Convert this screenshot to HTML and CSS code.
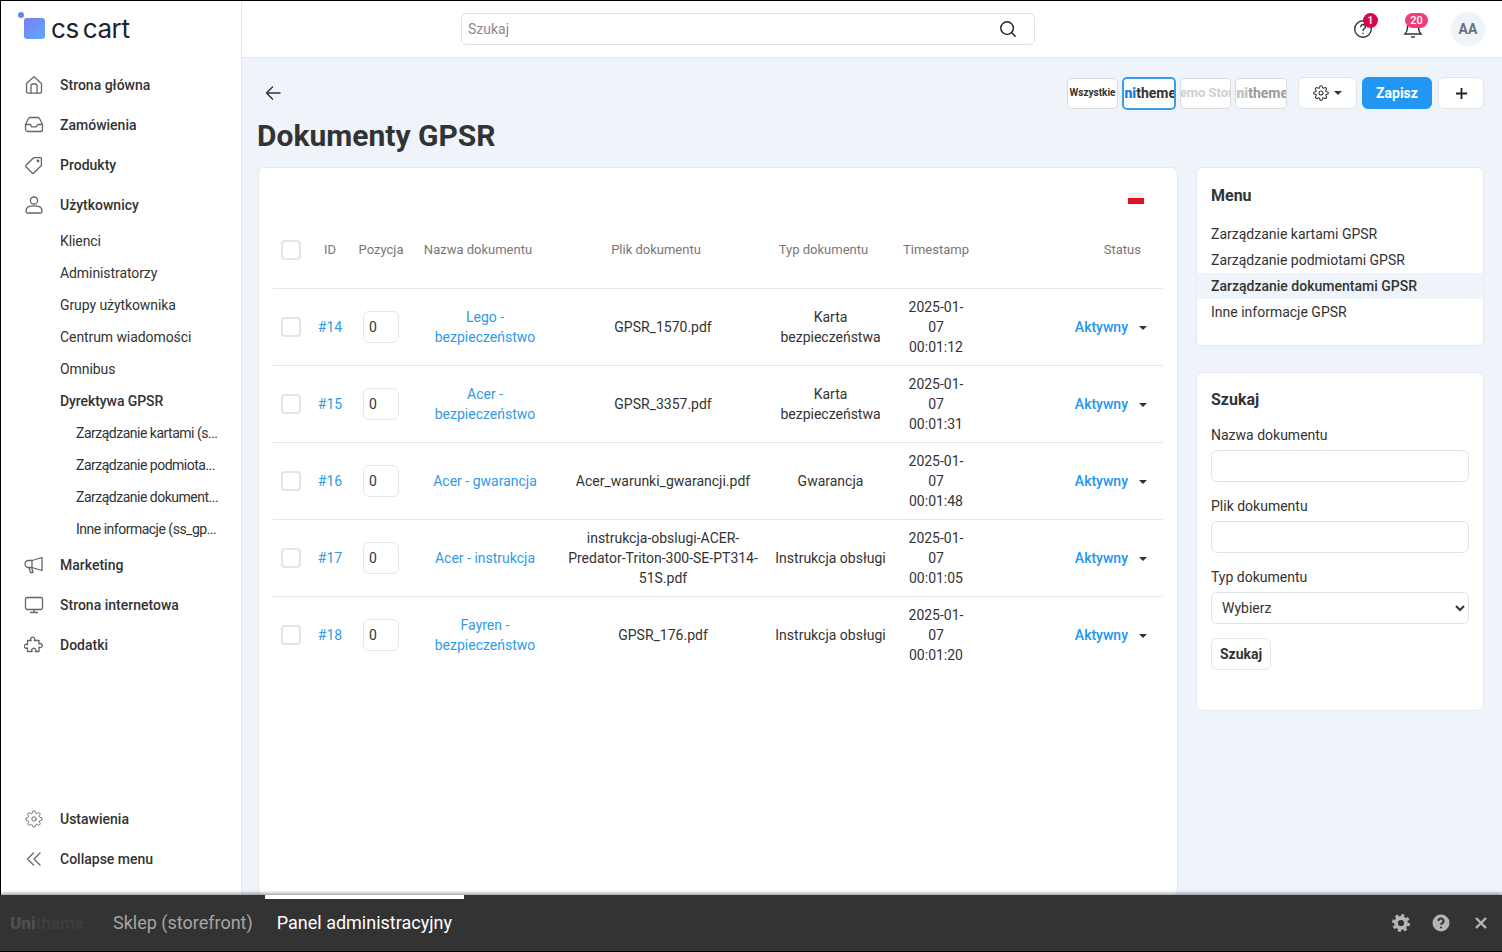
FILE: index.html
```html
<!DOCTYPE html>
<html lang="pl">
<head>
    <meta charset="UTF-8">
    <meta name="viewport" content="width=device-width, initial-scale=1.0">
    <title>Dokumenty GPSR</title>
    <link rel="stylesheet" href="styles.css">
</head>
<body>
    <div class="app">
        <div class="main">
            <aside class="sidebar">
                <div class="logo">
                    <span class="logo-dot"></span>
                    <span class="logo-mark"></span>
                    <span class="logo-text">cs cart</span>
                </div>
                <nav class="nav">
                    <a class="nav-item">
                        <svg class="nav-icon" viewBox="0 0 20 20"><path d="M2.500 8.500 10 1.800l7.500 6.700v7.700a2 2 0 0 1-2 2h-11a2 2 0 0 1-2-2z"/><path d="M7 18v-7a2 2 0 0 1 2-2h2a2 2 0 0 1 2 2v7"/></svg>
                        Strona główna
                    </a>
                    <a class="nav-item">
                        <svg class="nav-icon" viewBox="0 0 20 20"><path d="M1.500 9.500 4.500 3.500a2 2 0 0 1 1.600-1h7.800a2 2 0 0 1 1.600 1l3 6v5a2 2 0 0 1-2 2h-13a2 2 0 0 1-2-2z"/><path d="M1.500 9.500h4.800l1.400 2.400h4.600l1.400-2.400h4.800"/></svg>
                        Zamówienia
                    </a>
                    <a class="nav-item">
                        <svg class="nav-icon" viewBox="0 0 20 20"><path d="M2 10.300 9.600 2.700h7a.8.8 0 0 1 .8.800v7l-7.600 7.500a1.200 1.200 0 0 1-1.700 0l-6.100-6.200a1.100 1.100 0 0 1 0-1.500z"/><circle cx="14" cy="6" r=".8"/></svg>
                        Produkty
                    </a>
                    <a class="nav-item">
                        <svg class="nav-icon" viewBox="0 0 20 20"><circle cx="10" cy="5.600" r="3.600"/><path d="M2 15.500c0-3 2.800-4.600 8-4.600s8 1.600 8 4.600v1a1.500 1.500 0 0 1-1.500 1.500h-13A1.500 1.500 0 0 1 2 16.500z"/></svg>
                        Użytkownicy
                    </a>
                    <a class="nav-sub">Klienci</a>
                    <a class="nav-sub">Administratorzy</a>
                    <a class="nav-sub">Grupy użytkownika</a>
                    <a class="nav-sub">Centrum wiadomości</a>
                    <a class="nav-sub">Omnibus</a>
                    <a class="nav-sub is-open">Dyrektywa GPSR</a>
                    <a class="nav-sub nav-deep">Zarządzanie kartami (s...</a>
                    <a class="nav-sub nav-deep">Zarządzanie podmiota...</a>
                    <a class="nav-sub nav-deep">Zarządzanie dokument...</a>
                    <a class="nav-sub nav-deep">Inne informacje (ss_gp...</a>
                    <a class="nav-item">
                        <svg class="nav-icon" viewBox="0 0 20 20"><path d="M18 2.500v13L8 12.500H4.500a3 3 0 0 1 0-7H8z"/><path d="M8 5.500v7"/><path d="m5 12.500 1.500 5h2.500l-1.300-4.800"/></svg>
                        Marketing
                    </a>
                    <a class="nav-item">
                        <svg class="nav-icon" viewBox="0 0 20 20"><rect x="1.500" y="2.500" width="17" height="12" rx="1.800"/><path d="M10 14.500v3M6.500 17.500h7"/></svg>
                        Strona internetowa
                    </a>
                    <a class="nav-item">
                        <svg class="nav-icon" viewBox="0 0 20 20"><path d="M3.500 5.500H7.200a2 2 0 1 1 3.100 0H15V9a2 2 0 1 1 0 3.100V16.500H11.300a2 2 0 1 0-3.100 0H3.500V12.800a2 2 0 1 1 0-3.100z"/></svg>
                        Dodatki
                    </a>
                </nav>
                <div class="nav nav-bottom">
                    <a class="nav-item">
                        <svg class="nav-icon" viewBox="-1.500 -1.500 27 27"><circle cx="12" cy="12" r="3"/><path d="M19.400 15a1.650 1.650 0 0 0 .33 1.820l.06.06a2 2 0 1 1-2.830 2.830l-.06-.06a1.650 1.650 0 0 0-2.820 1.170V21a2 2 0 1 1-4 0v-.09A1.650 1.650 0 0 0 7.260 19.740l-.06.06a2 2 0 1 1-2.830-2.830l.06-.06A1.650 1.650 0 0 0 3.260 14H3a2 2 0 1 1 0-4h.09A1.650 1.650 0 0 0 4.260 7.180l-.06-.06a2 2 0 1 1 2.830-2.830l.06.06A1.650 1.650 0 0 0 10 3.090V3a2 2 0 1 1 4 0v.09a1.650 1.650 0 0 0 2.820 1.170l.06-.06a2 2 0 1 1 2.830 2.830l-.06.06A1.650 1.650 0 0 0 20.910 10H21a2 2 0 1 1 0 4h-.09a1.650 1.650 0 0 0-1.510 1z"/></svg>
                        Ustawienia
                    </a>
                    <a class="nav-item">
                        <svg class="nav-icon" viewBox="0 0 20 20"><path d="M9.500 4 3.500 10l6 6M16 4l-6 6 6 6"/></svg>
                        Collapse menu
                    </a>
                </div>
            </aside>

            <div class="page">
                <header class="topbar">
                    <div class="search">
                        <span class="search-hint">Szukaj</span>
                        <svg class="search-icon" viewBox="0 0 20 20"><circle cx="9" cy="9" r="7"/><path d="m14.200 14.200 3.800 3.800"/></svg>
                    </div>
                    <div class="top-icons">
                        <span class="top-icon">
                            <svg viewBox="0 0 20 20"><circle cx="10" cy="10" r="8.300"/><path d="M7.800 7.800a2.300 2.300 0 1 1 3.400 2c-.8.500-1.200 1-1.200 1.700M10 14.200v.3"/></svg>
                            <span class="badge badge-help">1</span>
                        </span>
                        <span class="top-icon">
                            <svg viewBox="0 0 20 20"><path d="M4.500 8a5.500 5.500 0 0 1 11 0c0 4 1.500 6 2.500 7H2c1-1 2.500-3 2.500-7z"/><path d="M8.500 18h3"/></svg>
                            <span class="badge badge-bell">20</span>
                        </span>
                        <span class="avatar">AA</span>
                    </div>
                </header>

                <div class="content">
                    <div class="toolbar">
                        <svg class="back" viewBox="0 0 16 16"><path d="M15 8H1.500M7.500 2 1.500 8l6 6"/></svg>
                        <div class="tools">
                            <div class="stores">
                                <span class="store store-all">Wszystkie</span>
                                <span class="store store-logo is-current"><span class="store-name"><b>Uni</b>theme</span></span>
                                <span class="store store-demo">Demo Store</span>
                                <span class="store store-logo is-faded"><span class="store-name"><b>Uni</b>theme</span></span>
                            </div>
                            <button class="btn btn-gear">
                                <svg viewBox="0 0 24 24"><circle cx="12" cy="12" r="3"/><path d="M19.400 15a1.650 1.650 0 0 0 .33 1.820l.06.06a2 2 0 1 1-2.830 2.830l-.06-.06a1.650 1.650 0 0 0-2.820 1.170V21a2 2 0 1 1-4 0v-.09A1.650 1.650 0 0 0 7.260 19.740l-.06.06a2 2 0 1 1-2.830-2.830l.06-.06A1.650 1.650 0 0 0 3.260 14H3a2 2 0 1 1 0-4h.09A1.650 1.650 0 0 0 4.260 7.180l-.06-.06a2 2 0 1 1 2.830-2.830l.06.06A1.650 1.650 0 0 0 10 3.090V3a2 2 0 1 1 4 0v.09a1.650 1.650 0 0 0 2.820 1.170l.06-.06a2 2 0 1 1 2.830 2.830l-.06.06A1.650 1.650 0 0 0 20.910 10H21a2 2 0 1 1 0 4h-.09a1.650 1.650 0 0 0-1.510 1z"/></svg>
                                <span class="caret"></span>
                            </button>
                            <button class="btn btn-save">Zapisz</button>
                            <button class="btn btn-plus">
                                <svg viewBox="0 0 14 14"><path d="M7 1v12M1 7h12"/></svg>
                            </button>
                        </div>
                    </div>
                    <h1 class="title">Dokumenty GPSR</h1>

                    <div class="columns">
                        <section class="card card-table">
                            <div class="flag-row"><span class="flag"></span></div>
                            <table class="docs">
                                <thead>
                                    <tr>
                                        <th class="col-check"><span class="check"></span></th>
                                        <th class="col-id">ID</th>
                                        <th class="col-pos">Pozycja</th>
                                        <th class="col-name sortable">Nazwa dokumentu</th>
                                        <th class="col-file sortable">Plik dokumentu</th>
                                        <th class="col-type sortable">Typ dokumentu</th>
                                        <th class="col-time">Timestamp</th>
                                        <th class="col-status">Status</th>
                                    </tr>
                                </thead>
                                <tbody>
                                    <tr>
                                        <td class="col-check"><span class="check"></span></td>
                                        <td class="col-id"><a>#14</a></td>
                                        <td class="col-pos"><span class="pos">0</span></td>
                                        <td class="col-name"><a>Lego - bezpieczeństwo</a></td>
                                        <td class="col-file">GPSR_1570.pdf</td>
                                        <td class="col-type">Karta bezpieczeństwa</td>
                                        <td class="col-time">2025-01-07 00:01:12</td>
                                        <td class="col-status"><a class="state">Aktywny</a><span class="caret"></span></td>
                                    </tr>
                                    <tr>
                                        <td class="col-check"><span class="check"></span></td>
                                        <td class="col-id"><a>#15</a></td>
                                        <td class="col-pos"><span class="pos">0</span></td>
                                        <td class="col-name"><a>Acer - bezpieczeństwo</a></td>
                                        <td class="col-file">GPSR_3357.pdf</td>
                                        <td class="col-type">Karta bezpieczeństwa</td>
                                        <td class="col-time">2025-01-07 00:01:31</td>
                                        <td class="col-status"><a class="state">Aktywny</a><span class="caret"></span></td>
                                    </tr>
                                    <tr>
                                        <td class="col-check"><span class="check"></span></td>
                                        <td class="col-id"><a>#16</a></td>
                                        <td class="col-pos"><span class="pos">0</span></td>
                                        <td class="col-name"><a>Acer - gwarancja</a></td>
                                        <td class="col-file">Acer_warunki_gwarancji.pdf</td>
                                        <td class="col-type">Gwarancja</td>
                                        <td class="col-time">2025-01-07 00:01:48</td>
                                        <td class="col-status"><a class="state">Aktywny</a><span class="caret"></span></td>
                                    </tr>
                                    <tr>
                                        <td class="col-check"><span class="check"></span></td>
                                        <td class="col-id"><a>#17</a></td>
                                        <td class="col-pos"><span class="pos">0</span></td>
                                        <td class="col-name"><a>Acer - instrukcja</a></td>
                                        <td class="col-file">instrukcja-obslugi-ACER-Predator-Triton-300-SE-PT314-51S.pdf</td>
                                        <td class="col-type">Instrukcja obsługi</td>
                                        <td class="col-time">2025-01-07 00:01:05</td>
                                        <td class="col-status"><a class="state">Aktywny</a><span class="caret"></span></td>
                                    </tr>
                                    <tr>
                                        <td class="col-check"><span class="check"></span></td>
                                        <td class="col-id"><a>#18</a></td>
                                        <td class="col-pos"><span class="pos">0</span></td>
                                        <td class="col-name"><a>Fayren - bezpieczeństwo</a></td>
                                        <td class="col-file">GPSR_176.pdf</td>
                                        <td class="col-type">Instrukcja obsługi</td>
                                        <td class="col-time">2025-01-07 00:01:20</td>
                                        <td class="col-status"><a class="state">Aktywny</a><span class="caret"></span></td>
                                    </tr>
                                </tbody>
                            </table>
                        </section>

                        <div class="side">
                            <section class="card card-menu">
                                <h2>Menu</h2>
                                <a class="menu-link">Zarządzanie kartami GPSR</a>
                                <a class="menu-link">Zarządzanie podmiotami GPSR</a>
                                <a class="menu-link is-active">Zarządzanie dokumentami GPSR</a>
                                <a class="menu-link">Inne informacje GPSR</a>
                            </section>
                            <section class="card card-search">
                                <h2>Szukaj</h2>
                                <label class="field-label">Nazwa dokumentu</label>
                                <input class="field" type="text">
                                <label class="field-label">Plik dokumentu</label>
                                <input class="field" type="text">
                                <label class="field-label">Typ dokumentu</label>
                                <select class="field field-select"><option>Wybierz</option></select>
                                <button class="btn btn-search">Szukaj</button>
                            </section>
                        </div>
                    </div>
                </div>
            </div>
        </div>

        <footer class="bar">
            <span class="bar-logo"><b>Uni</b>theme</span>
            <a class="bar-tab">Sklep (storefront)</a>
            <a class="bar-tab is-active">Panel administracyjny</a>
            <div class="bar-icons">
                <svg viewBox="0 0 20 20"><circle cx="10" cy="10" r="5" class="gear-ring"/><circle cx="10" cy="10" r="7.500" class="gear-teeth"/></svg>
                <svg viewBox="0 0 20 20"><circle cx="10" cy="10" r="8.500" class="q-disc"/><path d="M7.500 8a2.500 2.500 0 1 1 3.700 2.200c-.8.500-1.200.9-1.200 1.600M10 13.700v1.600" class="q-mark"/></svg>
                <svg viewBox="0 0 20 20"><path d="m5 5 10 10M15 5 5 15" class="x-mark"/></svg>
            </div>
        </footer>
    </div>
</body>
</html>
```

FILE: styles.css
```css
* {
    box-sizing: border-box;
}

body {
    margin: 0;
    font-family: Roboto, Arial, sans-serif;
    font-size: 14px;
    line-height: 20px;
    color: #333333;
    background-color: #000000;
}

a {
    color: inherit;
    text-decoration: none;
}

.app {
    display: flex;
    flex-direction: column;
    height: 952px;
    padding: 1px 0 1px 1px;
    overflow: hidden;
}

.main {
    display: flex;
    flex: 1;
    min-height: 0;
    background-color: #eff3fa;
}

/* sidebar */
.sidebar {
    display: flex;
    flex-direction: column;
    width: 241px;
    flex-shrink: 0;
    background-color: #ffffff;
    border-right: 1px solid #e6e9ee;
}

.logo {
    position: relative;
    display: flex;
    align-items: center;
    height: 55px;
    padding-left: 23px;
}

.logo-dot {
    position: absolute;
    left: 17px;
    top: 11px;
    width: 6px;
    height: 6px;
    border-radius: 50%;
    background-color: #5b8cf5;
}

.logo-mark {
    width: 21px;
    height: 21px;
    margin-right: 6px;
    border-radius: 3px;
    background: linear-gradient(135deg, #7a7ffb, #5fa8fa);
}

.logo-text {
    font-family: Inter, sans-serif;
    font-size: 26px;
    letter-spacing: -0.4px;
    word-spacing: -3px;
    color: #20222e;
}

.nav {
    display: flex;
    flex-direction: column;
    padding-top: 9px;
}

.nav-bottom {
    margin-top: auto;
    padding: 0 0 16px;
}

.nav-item {
    display: flex;
    align-items: center;
    gap: 16px;
    height: 40px;
    padding-left: 23px;
    font-weight: 500;
}

.nav-icon {
    width: 20px;
    height: 20px;
    fill: none;
    stroke: #666666;
    stroke-width: 1.3;
    stroke-linejoin: round;
    stroke-linecap: round;
}

.nav-sub {
    display: flex;
    align-items: center;
    height: 32px;
    padding-left: 59px;
    letter-spacing: -0.08px;
}

.nav-sub.is-open {
    font-weight: 500;
}

.nav-deep {
    padding-left: 75px;
    letter-spacing: -0.5px;
}

/* top bar */
.page {
    display: flex;
    flex-direction: column;
    flex: 1;
    min-width: 0;
}

.topbar {
    display: flex;
    align-items: center;
    height: 57px;
    flex-shrink: 0;
    padding: 0 17px 1px 219px;
    background-color: #ffffff;
    border-bottom: 1px solid #e3e7ee;
}

.search {
    display: flex;
    align-items: center;
    justify-content: space-between;
    width: 574px;
    height: 32px;
    padding: 0 17px 0 6px;
    border: 1px solid #dfe3e8;
    border-radius: 5px;
}

.search-hint {
    color: #8a8a8a;
}

.search-icon {
    width: 18px;
    height: 18px;
    fill: none;
    stroke: #222222;
    stroke-width: 1.6;
    stroke-linecap: round;
}

.top-icons {
    display: flex;
    align-items: center;
    margin-left: auto;
}

.top-icon {
    position: relative;
    width: 20px;
    height: 20px;
    margin-right: 30px;
}

.top-icon svg {
    display: block;
    width: 20px;
    height: 20px;
    fill: none;
    stroke: #333333;
    stroke-width: 1.4;
    stroke-linecap: round;
}

.badge {
    position: absolute;
    top: -6px;
    height: 15px;
    border-radius: 8px;
    font-size: 11px;
    font-weight: 500;
    line-height: 15px;
    text-align: center;
    color: #ffffff;
}

.badge-help {
    left: 10px;
    width: 15px;
    background-color: #d5084f;
}

.badge-bell {
    left: 2px;
    width: 23px;
    background-color: #ef3d7b;
}

.avatar {
    display: flex;
    align-items: center;
    justify-content: center;
    width: 34px;
    height: 34px;
    margin-left: -2px;
    border-radius: 50%;
    font-weight: 700;
    font-size: 14px;
    color: #6b7280;
    background-color: #eff3fa;
}

/* content */
.content {
    display: flex;
    flex-direction: column;
    flex: 1;
    min-height: 0;
    padding: 19px 18px 0 16px;
}

.toolbar {
    display: flex;
    align-items: center;
    justify-content: space-between;
    height: 32px;
    flex-shrink: 0;
}

.back {
    width: 16px;
    height: 16px;
    margin-left: 7px;
    fill: none;
    stroke: #333333;
    stroke-width: 1.5;
    stroke-linecap: round;
    stroke-linejoin: round;
}

.tools {
    display: flex;
    align-items: center;
}

.stores {
    display: flex;
    align-items: center;
    gap: 4px;
    margin-right: 11px;
}

.store {
    display: flex;
    align-items: center;
    justify-content: center;
    width: 52px;
    height: 31px;
    overflow: hidden;
    white-space: nowrap;
    border: 1px solid #d8dbe0;
    border-radius: 5px;
    background-color: #ffffff;
}

.store-all {
    width: 51px;
    font-size: 10px;
    font-weight: 700;
}

.store-logo {
    justify-content: flex-end;
    font-size: 14px;
    font-weight: 700;
}

.store-name {
    flex-shrink: 0;
    margin-right: -2px;
}

.store-logo b {
    color: #1c7ce0;
}

.store.is-current {
    width: 54px;
    height: 33px;
    border: 2px solid #3a9fe8;
}

.store.is-faded {
    color: #9a9a9a;
}

.store.is-faded b {
    color: #c2c2c2;
}

.store-demo {
    width: 51px;
    font-size: 13px;
    font-weight: 700;
    color: #cfcfcf;
}

.btn {
    display: flex;
    align-items: center;
    justify-content: center;
    height: 32px;
    padding: 0;
    font-family: inherit;
    font-size: 14px;
    font-weight: 700;
    color: #333333;
    border: 1px solid #e2e5ea;
    border-radius: 6px;
    background-color: #ffffff;
}

.btn-gear {
    gap: 5px;
    width: 59px;
    margin-right: 5px;
}

.btn-gear svg {
    width: 16px;
    height: 16px;
    fill: none;
    stroke: #333333;
    stroke-width: 1.6;
}

.btn-save {
    width: 70px;
    margin-right: 6px;
    color: #ffffff;
    border-color: #2196f3;
    background-color: #2196f3;
}

.btn-plus {
    width: 46px;
}

.btn-plus svg {
    width: 13px;
    height: 13px;
    fill: none;
    stroke: #222222;
    stroke-width: 2;
}

.caret {
    display: inline-block;
    width: 0;
    height: 0;
    border-top: 4px solid #333333;
    border-left: 4px solid transparent;
    border-right: 4px solid transparent;
}

.title {
    margin: 9px 0 13px -1px;
    font-size: 30px;
    line-height: 36px;
    font-weight: 700;
    flex-shrink: 0;
}

.columns {
    display: flex;
    flex: 1;
    min-height: 0;
    gap: 18px;
}

.card {
    background-color: #ffffff;
    border: 1px solid #e6e9ee;
    border-radius: 6px;
}

.card h2 {
    margin: 0;
    font-size: 16px;
    line-height: 24px;
    font-weight: 700;
}

/* table card */
.card-table {
    width: 920px;
    flex-shrink: 0;
    padding: 0 14px;
    border-bottom: none;
}

.flag-row {
    display: flex;
    justify-content: flex-end;
    height: 43px;
    padding: 25px 19px 0 0;
}

.flag {
    width: 16px;
    height: 11px;
    background: linear-gradient(#f3f3f3 45%, #e2121f 45%);
}

.docs {
    width: 890px;
    table-layout: fixed;
    border-collapse: collapse;
}

.docs th {
    height: 77px;
    padding: 2px 2px 0;
    font-size: 13px;
    font-weight: 400;
    color: #777777;
    text-align: center;
}

.docs th.sortable {
    padding-right: 16px;
}

.docs td {
    height: 77px;
    padding: 8px;
    text-align: center;
    border-top: 1px solid #e3e6ea;
}

.docs a {
    color: #2f9be8;
}

.col-check {
    width: 36px;
}

.col-id {
    width: 42px;
}

.col-pos {
    width: 60px;
}

.col-name {
    width: 148px;
}

.col-file {
    width: 208px;
}

.col-type {
    width: 127px;
}

.docs td.col-type {
    padding-left: 6px;
    padding-right: 6px;
}

.col-time {
    width: 84px;
}

.docs th.col-status {
    padding-right: 22px;
    text-align: right;
}

.docs td.col-status {
    padding-right: 16px;
    text-align: right;
    white-space: nowrap;
}

.docs .state {
    margin-right: 11px;
    font-weight: 500;
    color: #2196f3;
}

.col-status .caret {
    vertical-align: 2px;
}

.check {
    display: block;
    width: 20px;
    height: 20px;
    margin: 0 auto;
    border: 2px solid #e1e4e8;
    border-radius: 4px;
}

.pos {
    display: block;
    width: 36px;
    height: 32px;
    margin: 0 auto;
    padding-left: 5px;
    line-height: 30px;
    text-align: left;
    border: 1px solid #e3e6ea;
    border-radius: 6px;
}

/* right column */
.side {
    display: flex;
    flex-direction: column;
    gap: 26px;
    width: 288px;
}

.card-menu {
    height: 179px;
    padding-top: 16px;
}

.card-menu h2 {
    margin: 0 14px 13px;
}

.menu-link {
    display: block;
    height: 26px;
    padding: 0 14px;
    line-height: 26px;
}

.menu-link.is-active {
    font-weight: 500;
    background-color: #eff3fa;
}

.card-search {
    display: flex;
    flex-direction: column;
    align-items: flex-start;
    height: 339px;
    padding: 15px 14px 0;
}

.card-search h2 {
    margin-bottom: -1px;
}

.field-label {
    margin-top: 14px;
    margin-bottom: 5px;
}

.field {
    width: 100%;
    height: 32px;
    padding: 0 10px;
    font-family: inherit;
    font-size: 14px;
    color: #333333;
    border: 1px solid #dfe3e8;
    border-radius: 6px;
    background-color: #ffffff;
}

.field-select {
    padding: 0 6px;
}

.btn-search {
    width: 60px;
    margin-top: 14px;
}

/* bottom bar */
.bar {
    display: flex;
    align-items: stretch;
    position: relative;
    height: 56px;
    flex-shrink: 0;
    margin-left: -1px;
    font-size: 18px;
    color: #a5a5a5;
    background-color: #333333;
    box-shadow: 0 -2px 3px rgba(0, 0, 0, 0.35);
}

.bar-logo {
    align-self: center;
    width: 101px;
    padding-left: 10px;
    font-weight: 700;
    font-size: 17px;
    color: #3f3f3f;
}

.bar-logo b {
    color: #505050;
}

.bar-tab {
    display: flex;
    align-items: center;
    padding: 0 12px;
}

.bar-tab.is-active {
    color: #ffffff;
    box-shadow: inset 0 4px 0 #ffffff;
}

.bar-icons {
    display: flex;
    align-items: center;
    gap: 20px;
    margin-left: auto;
    padding-right: 11px;
}

.bar-icons svg {
    width: 20px;
    height: 20px;
    fill: none;
}

.gear-ring {
    stroke: #b5b5b5;
    stroke-width: 3.800;
}

.gear-teeth {
    stroke: #b5b5b5;
    stroke-width: 3;
    stroke-dasharray: 3 2.890;
}

.q-disc {
    fill: #b5b5b5;
}

.q-mark {
    stroke: #333333;
    stroke-width: 2;
}

.x-mark {
    stroke: #b5b5b5;
    stroke-width: 2.400;
}
```
